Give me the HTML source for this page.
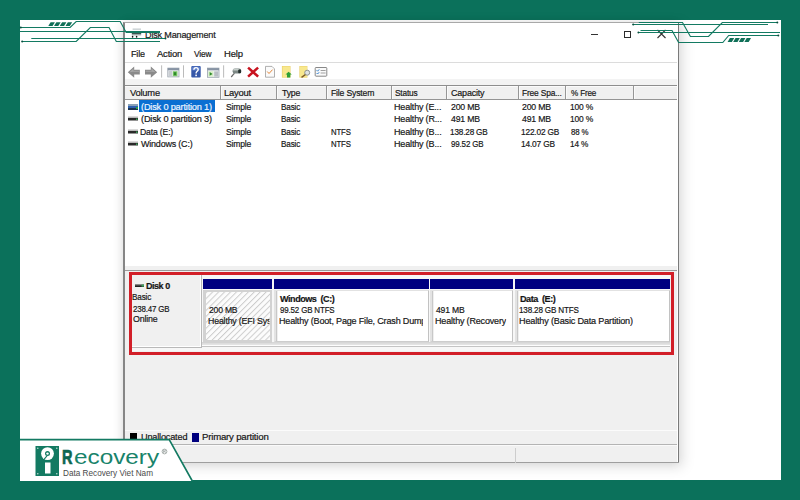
<!DOCTYPE html>
<html><head><meta charset="utf-8">
<style>
*{margin:0;padding:0;box-sizing:border-box}
html,body{width:800px;height:500px;overflow:hidden}
body{background:#0b715b;position:relative;font-family:"Liberation Sans",sans-serif;color:#161616}
.a{position:absolute}
.t{position:absolute;white-space:nowrap;font-size:9.75px;line-height:11px;letter-spacing:-0.2px;color:#161616;-webkit-text-stroke:.2px #161616}
.b{font-weight:bold;color:#141414;letter-spacing:-.5px}
</style></head><body>

<div class="a" style="left:20px;top:20px;width:761px;height:460px;background:#fff"></div>
<div class="a" style="left:123px;top:22px;width:556px;height:441px;background:transparent;box-shadow:3px 3px 12px 1px rgba(0,0,0,.13),-2px 0 9px rgba(0,0,0,.06)"></div>
<div class="a" style="left:123px;top:22px;width:556px;height:441px;background:#fff;border:1px solid #a8a8a8;border-left:2px solid #868686;border-right:1.8px solid #7a7a7a;border-bottom:1px solid #8a8a8a"></div>
<div class="t" style="left:145.07px;top:28.75px;transform:scaleX(0.933);transform-origin:0 0;color:#222">Disk Management</div>
<svg class="a" style="left:127px;top:26px" width="16" height="14" viewBox="127 26 16 14">
  <rect x="132.6" y="28.4" width="8.4" height="1.6" fill="#cfd6d8"/>
  <rect x="131.8" y="31.4" width="9.4" height="2.6" fill="#3d5650"/>
  <rect x="131.8" y="34" width="9.4" height="1.4" fill="#9aa7a8"/>
  <ellipse cx="132.6" cy="36.8" rx="0.8" ry="1" fill="#111"/><ellipse cx="136.6" cy="36.8" rx="0.8" ry="1" fill="#111"/>
</svg>
<div class="a" style="left:591px;top:34px;width:7px;height:1px;background:#333"></div>
<div class="a" style="left:623.5px;top:30.5px;width:7.5px;height:7.5px;border:1.2px solid #2b2b2b"></div>
<svg class="a" style="left:656px;top:29px" width="11" height="10" viewBox="0 0 11 10"><path d="M1.5 1 L9.5 9 M9.5 1 L1.5 9" stroke="#333" stroke-width="1.1"/></svg>
<div class="t" style="left:130.82px;top:47.75px;transform:scaleX(0.929);transform-origin:0 0;">File</div>
<div class="t" style="left:156.80px;top:47.75px;transform:scaleX(0.969);transform-origin:0 0;">Action</div>
<div class="t" style="left:194.30px;top:47.75px;transform:scaleX(0.857);transform-origin:0 0;">View</div>
<div class="t" style="left:223.73px;top:47.75px;transform:scaleX(0.972);transform-origin:0 0;">Help</div>
<div class="a" style="left:125px;top:62px;width:552px;height:1px;background:#dcdcdc"></div>
<svg class="a" style="left:125px;top:63px" width="210" height="17" viewBox="125 63 210 17">
 <!-- back arrow -->
 <path d="M127.8 72.2 L134.2 66.6 V69.8 H139.8 V74.6 H134.2 V77.8 Z" fill="#8a8a8a"/>
 <path d="M129.5 72.2 L133.5 68.6 V70.8 H139 V71.8 H133 Z" fill="#a8a8a8"/>
 <!-- forward arrow -->
 <path d="M157.2 72.2 L150.8 66.6 V69.8 H145 V74.6 H150.8 V77.8 Z" fill="#8a8a8a"/>
 <path d="M155.5 72.2 L151.5 68.6 V70.8 H145.6 V71.8 H152 Z" fill="#a8a8a8"/>
 <!-- separators -->
 <rect x="161.2" y="65.3" width="0.9" height="12.3" fill="#b4b4b4"/>
 <rect x="183" y="65.3" width="0.9" height="12.3" fill="#b4b4b4"/>
 <rect x="223.2" y="65.3" width="0.9" height="12.3" fill="#b4b4b4"/>
 <!-- window icon 1 -->
 <rect x="167.8" y="68.1" width="11.2" height="8.8" fill="#eef1f4" stroke="#9aa3ad" stroke-width="0.8"/>
 <rect x="167.8" y="68.1" width="11.2" height="2.2" fill="#8793a3"/>
 <rect x="168.5" y="71" width="3.5" height="5.5" fill="#c9cdd2"/>
 <rect x="172.8" y="71.2" width="4.6" height="5" fill="#7ec86a"/>
 <rect x="173.8" y="72.2" width="2.4" height="3" fill="#2f8a2a"/>
 <!-- help -->
 <rect x="191.3" y="66" width="9.4" height="11.6" rx="1" fill="#3657a8"/>
 <rect x="192" y="66.6" width="8" height="4" rx="1" fill="#5a7cc8"/>
 <path d="M193.9 69.8 Q193.9 67.6 196 67.6 Q198.2 67.6 198.2 69.6 Q198.2 70.9 196.8 71.6 Q196.1 72 196.1 73.4" fill="none" stroke="#fff" stroke-width="1.4"/>
 <rect x="195.3" y="74.6" width="1.6" height="1.6" fill="#fff"/>
 <!-- window icon 2 -->
 <rect x="207.4" y="68.1" width="11.6" height="9.2" fill="#eceff2" stroke="#9aa3ad" stroke-width="0.8"/>
 <rect x="207.4" y="68.1" width="11.6" height="2.2" fill="#8793a3"/>
 <rect x="208.3" y="71.2" width="5" height="5.5" fill="#d8efc8"/>
 <path d="M209.6 72 L212.6 73.9 L209.6 75.8 Z" fill="#2f8a2a"/>
 <rect x="214.2" y="71.4" width="4" height="5.2" fill="#b9bec4"/>
 <!-- connect -->
 <path d="M231.2 77 L234.5 73.2" stroke="#6b6b6b" stroke-width="1.2"/>
 <rect x="232.6" y="68.6" width="8.6" height="4.8" rx="2.2" fill="#7d8885"/>
 <rect x="233.2" y="69" width="6" height="1.5" fill="#c5cdca"/>
 <rect x="238.2" y="69.4" width="2.9" height="3.8" rx="1" fill="#23302d"/>
 <!-- red x -->
 <path d="M249 68.4 L257.2 75.8 M257.2 68.4 L249 75.8" stroke="#c8131f" stroke-width="2.5" stroke-linecap="square"/>
 <!-- checklist doc -->
 <path d="M265.5 66.4 H272 L274.5 68.9 V77.2 H265.5 Z" fill="#fbfbfb" stroke="#9c9c9c" stroke-width="0.8"/>
 <path d="M267.2 71.5 L269 73.5 L272.6 69.6" fill="none" stroke="#e3873a" stroke-width="1"/>
 <!-- yellow doc green arrow -->
 <rect x="281.9" y="66" width="8.6" height="11.6" fill="#ead06a"/>
 <rect x="282.5" y="66.5" width="7.5" height="10.6" fill="#f8e88e"/>
 <path d="M288.6 71.8 L291.8 74.6 H290.3 V77.6 H287 V74.6 H285.5 Z" fill="#2ea036"/>
 <!-- yellow doc magnifier -->
 <rect x="299.4" y="66" width="8" height="11.6" fill="#ead06a"/>
 <rect x="300" y="66.5" width="7" height="10.6" fill="#f8e88e"/>
 <circle cx="307.2" cy="72.7" r="2.5" fill="#dfe3e3" stroke="#8d9393" stroke-width="1"/>
 <path d="M305.4 74.6 L301.5 77.4" stroke="#7a5a2a" stroke-width="1.3"/>
 <!-- properties -->
 <rect x="315.2" y="67.5" width="11.6" height="8.7" rx="0.8" fill="#fafafa" stroke="#7b7b7b" stroke-width="0.9"/>
 <path d="M316.6 70.2 L317.6 71.2 L319.2 69.4 M316.6 73 L317.6 74 L319.2 72.2" fill="none" stroke="#3a86d0" stroke-width="1"/>
 <rect x="320.6" y="70" width="5" height="0.8" fill="#8a8a8a"/>
 <rect x="320.6" y="72.6" width="5" height="0.8" fill="#8a8a8a"/>
</svg>
<div class="a" style="left:125px;top:79px;width:552px;height:6px;background:#f3f3f3"></div>
<div class="a" style="left:125px;top:85px;width:552px;height:1px;background:#8e8e8e"></div>
<div class="a" style="left:125px;top:86px;width:552px;height:13px;background:#f0f0f0;border-top:1px solid #fbfbfb"></div>
<div class="a" style="left:125px;top:98.5px;width:552px;height:1.2px;background:#949494"></div>
<div class="a" style="left:220px;top:86px;width:1.1px;height:12.5px;background:#969696;box-shadow:1px 0 0 #fafafa"></div>
<div class="a" style="left:276.2px;top:86px;width:1.1px;height:12.5px;background:#969696;box-shadow:1px 0 0 #fafafa"></div>
<div class="a" style="left:326.2px;top:86px;width:1.1px;height:12.5px;background:#969696;box-shadow:1px 0 0 #fafafa"></div>
<div class="a" style="left:390.5px;top:86px;width:1.1px;height:12.5px;background:#969696;box-shadow:1px 0 0 #fafafa"></div>
<div class="a" style="left:446.2px;top:86px;width:1.1px;height:12.5px;background:#969696;box-shadow:1px 0 0 #fafafa"></div>
<div class="a" style="left:517.6px;top:86px;width:1.1px;height:12.5px;background:#969696;box-shadow:1px 0 0 #fafafa"></div>
<div class="a" style="left:565.3px;top:86px;width:1.1px;height:12.5px;background:#969696;box-shadow:1px 0 0 #fafafa"></div>
<div class="a" style="left:632.9px;top:86px;width:1.1px;height:12.5px;background:#969696;box-shadow:1px 0 0 #fafafa"></div>
<div class="t" style="left:130.40px;top:86.75px;transform:scaleX(0.955);transform-origin:0 0;">Volume</div>
<div class="t" style="left:224.24px;top:86.75px;transform:scaleX(0.963);transform-origin:0 0;">Layout</div>
<div class="t" style="left:281.80px;top:86.75px;transform:scaleX(0.895);transform-origin:0 0;">Type</div>
<div class="t" style="left:330.81px;top:86.75px;transform:scaleX(0.888);transform-origin:0 0;">File System</div>
<div class="t" style="left:395.00px;top:86.75px;transform:scaleX(0.852);transform-origin:0 0;">Status</div>
<div class="t" style="left:451.00px;top:86.75px;transform:scaleX(0.919);transform-origin:0 0;">Capacity</div>
<div class="t" style="left:521.64px;top:86.75px;transform:scaleX(0.861);transform-origin:0 0;">Free Spa...</div>
<div class="t" style="left:571.25px;top:86.75px;transform:scaleX(0.833);transform-origin:0 0;">% Free</div>
<div class="a" style="left:139px;top:100px;width:76px;height:12px;background:#0a6fd2"></div>
<svg class="a" style="left:128px;top:103.90px" width="10" height="6" viewBox="0 0 10 6"><rect x="0" y="0" width="10" height="2" fill="#8aa2b8"/><rect x="0" y="2" width="10" height="2" fill="#2d5fb0"/><rect x="0" y="4" width="10" height="2" fill="#1b3350"/><rect x="8" y="3" width="2" height="2" fill="#2aa050"/></svg>
<div class="t" style="left:140.60px;top:100.85px;transform:scaleX(0.944);transform-origin:0 0;color:#eef5ff;-webkit-text-stroke-color:#eef5ff">(Disk 0 partition 1)</div>
<div class="t" style="left:225.80px;top:100.85px;transform:scaleX(0.876);transform-origin:0 0;">Simple</div>
<div class="t" style="left:280.96px;top:100.85px;transform:scaleX(0.841);transform-origin:0 0;">Basic</div>
<div class="t" style="left:394.07px;top:100.85px;transform:scaleX(0.925);transform-origin:0 0;">Healthy (E...</div>
<div class="t" style="left:451.25px;top:100.85px;transform:scaleX(0.894);transform-origin:0 0;">200 MB</div>
<div class="t" style="left:521.90px;top:100.85px;transform:scaleX(0.894);transform-origin:0 0;">200 MB</div>
<div class="t" style="left:570.38px;top:100.85px;transform:scaleX(0.865);transform-origin:0 0;">100 %</div>
<svg class="a" style="left:128px;top:116.35px" width="10" height="6" viewBox="0 0 10 6"><rect x="0" y="0.5" width="10" height="1.5" fill="#b8b8b8"/><rect x="0" y="2" width="10" height="2.5" fill="#2a2a2a"/><rect x="8" y="2.5" width="1.5" height="1.5" fill="#3aa35a"/></svg>
<div class="t" style="left:140.60px;top:113.30px;transform:scaleX(0.944);transform-origin:0 0;">(Disk 0 partition 3)</div>
<div class="t" style="left:225.80px;top:113.30px;transform:scaleX(0.876);transform-origin:0 0;">Simple</div>
<div class="t" style="left:280.96px;top:113.30px;transform:scaleX(0.841);transform-origin:0 0;">Basic</div>
<div class="t" style="left:394.07px;top:113.30px;transform:scaleX(0.925);transform-origin:0 0;">Healthy (R...</div>
<div class="t" style="left:451.25px;top:113.30px;transform:scaleX(0.894);transform-origin:0 0;">491 MB</div>
<div class="t" style="left:521.90px;top:113.30px;transform:scaleX(0.894);transform-origin:0 0;">491 MB</div>
<div class="t" style="left:570.38px;top:113.30px;transform:scaleX(0.865);transform-origin:0 0;">100 %</div>
<svg class="a" style="left:128px;top:128.80px" width="10" height="6" viewBox="0 0 10 6"><rect x="0" y="0.5" width="10" height="1.5" fill="#b8b8b8"/><rect x="0" y="2" width="10" height="2.5" fill="#2a2a2a"/><rect x="8" y="2.5" width="1.5" height="1.5" fill="#3aa35a"/></svg>
<div class="t" style="left:139.71px;top:125.75px;transform:scaleX(0.889);transform-origin:0 0;">Data (E:)</div>
<div class="t" style="left:225.80px;top:125.75px;transform:scaleX(0.876);transform-origin:0 0;">Simple</div>
<div class="t" style="left:280.96px;top:125.75px;transform:scaleX(0.841);transform-origin:0 0;">Basic</div>
<div class="t" style="left:330.90px;top:125.75px;transform:scaleX(0.800);transform-origin:0 0;">NTFS</div>
<div class="t" style="left:394.07px;top:125.75px;transform:scaleX(0.930);transform-origin:0 0;">Healthy (B...</div>
<div class="t" style="left:450.41px;top:125.75px;transform:scaleX(0.839);transform-origin:0 0;">138.28 GB</div>
<div class="t" style="left:521.05px;top:125.75px;transform:scaleX(0.852);transform-origin:0 0;">122.02 GB</div>
<div class="t" style="left:571.25px;top:125.75px;transform:scaleX(0.807);transform-origin:0 0;">88 %</div>
<svg class="a" style="left:128px;top:141.25px" width="10" height="6" viewBox="0 0 10 6"><rect x="0" y="0.5" width="10" height="1.5" fill="#b8b8b8"/><rect x="0" y="2" width="10" height="2.5" fill="#2a2a2a"/><rect x="8" y="2.5" width="1.5" height="1.5" fill="#3aa35a"/></svg>
<div class="t" style="left:140.60px;top:138.20px;transform:scaleX(0.918);transform-origin:0 0;">Windows (C:)</div>
<div class="t" style="left:225.80px;top:138.20px;transform:scaleX(0.876);transform-origin:0 0;">Simple</div>
<div class="t" style="left:280.96px;top:138.20px;transform:scaleX(0.841);transform-origin:0 0;">Basic</div>
<div class="t" style="left:330.90px;top:138.20px;transform:scaleX(0.800);transform-origin:0 0;">NTFS</div>
<div class="t" style="left:394.07px;top:138.20px;transform:scaleX(0.930);transform-origin:0 0;">Healthy (B...</div>
<div class="t" style="left:451.25px;top:138.20px;transform:scaleX(0.819);transform-origin:0 0;">99.52 GB</div>
<div class="t" style="left:521.04px;top:138.20px;transform:scaleX(0.856);transform-origin:0 0;">14.07 GB</div>
<div class="t" style="left:570.40px;top:138.20px;transform:scaleX(0.845);transform-origin:0 0;">14 %</div>
<div class="a" style="left:125px;top:265.5px;width:552px;height:4.5px;background:#f0f0f0"></div>
<div class="a" style="left:125px;top:270px;width:552px;height:1px;background:#9a9a9a"></div>
<div class="a" style="left:125px;top:271px;width:552px;height:159px;background:#f0f0f0"></div>
<div class="a" style="left:132px;top:275px;width:538px;height:76px;background:#f7f7f7"></div>
<div class="a" style="left:132px;top:275px;width:70px;height:73px;background:#f0f0f0;border-right:1px solid #b9b9b9;border-bottom:1px solid #b9b9b9;box-shadow:inset -1px -1px 0 #fff"></div>
<div class="a" style="left:202px;top:342px;width:468px;height:3px;background:linear-gradient(#d4d4d4,#e6e6e6)"></div>
<div class="a" style="left:202px;top:345px;width:468px;height:1px;background:#fdfdfd"></div>
<div class="a" style="left:202px;top:346.3px;width:468px;height:1.2px;background:#c4c4c4"></div>
<div class="a" style="left:203px;top:279.2px;width:69px;height:9.6px;background:#000080"></div>
<div class="a" style="left:203px;top:289.5px;width:69px;height:53px;background:#d2d2d2"></div>
<svg class="a" style="left:205.6px;top:291.5px" width="64.4" height="48.5"><defs><pattern id="h" width="4.2" height="4.2" patternUnits="userSpaceOnUse" patternTransform="rotate(45)"><rect width="4.2" height="4.2" fill="#fcfcfc"/><rect width="1" height="4.2" fill="#cdcdcd"/></pattern></defs><rect width="100%" height="100%" fill="url(#h)"/></svg>
<div class="a" style="left:274.2px;top:279.2px;width:154.8px;height:9.6px;background:#000080"></div>
<div class="a" style="left:274.2px;top:289.5px;width:154.8px;height:52.7px;background:#fff;border-left:2.4px solid #e3e3e3;border-right:1px solid #c2c2c2;border-bottom:1px solid #cdcdcd;border-top:1px solid #e2e2e2;box-shadow:inset 1.3px 0 0 #c8c8c8"></div>
<div class="a" style="left:430.4px;top:279.2px;width:82.4px;height:9.6px;background:#000080"></div>
<div class="a" style="left:430.4px;top:289.5px;width:82.4px;height:52.7px;background:#fff;border-left:2.4px solid #e3e3e3;border-right:1px solid #c2c2c2;border-bottom:1px solid #cdcdcd;border-top:1px solid #e2e2e2;box-shadow:inset 1.3px 0 0 #c8c8c8"></div>
<div class="a" style="left:514.9px;top:279.2px;width:155.1px;height:9.6px;background:#000080"></div>
<div class="a" style="left:514.9px;top:289.5px;width:155.1px;height:52.7px;background:#fff;border-left:2.4px solid #e3e3e3;border-right:1px solid #c2c2c2;border-bottom:1px solid #cdcdcd;border-top:1px solid #e2e2e2;box-shadow:inset 1.3px 0 0 #c8c8c8"></div>
<svg class="a" style="left:134.5px;top:284px" width="9" height="3" viewBox="0 0 9 3"><rect width="9" height="1.2" fill="#8a8a8a"/><rect y="1.2" width="9" height="1.8" fill="#222"/><rect x="6.5" y="0.6" width="2.5" height="2" fill="#3aa35a"/></svg>
<div class="t b" style="left:146.00px;top:280.25px;transform:scaleX(0.923);transform-origin:0 0;">Disk 0</div>
<div class="t" style="left:132.16px;top:291.25px;transform:scaleX(0.841);transform-origin:0 0;">Basic</div>
<div class="t" style="left:132.70px;top:302.55px;transform:scaleX(0.811);transform-origin:0 0;">238.47 GB</div>
<div class="t" style="left:133.00px;top:313.25px;transform:scaleX(0.907);transform-origin:0 0;">Online</div>
<div class="t" style="left:208.50px;top:304.05px;transform:scaleX(0.875);transform-origin:0 0;">200 MB</div>
<div class="t" style="left:207.80px;top:315.05px;transform:scaleX(0.903);transform-origin:0 0;width:68.1px;overflow:hidden;">Healthy (EFI System Partition)</div>
<div class="t b" style="left:280.20px;top:292.75px;transform:scaleX(0.929);transform-origin:0 0;">Windows&nbsp; (C:)</div>
<div class="t" style="left:280.20px;top:304.05px;transform:scaleX(0.816);transform-origin:0 0;">99.52 GB NTFS</div>
<div class="t" style="left:279.27px;top:315.05px;transform:scaleX(0.928);transform-origin:0 0;width:155.4px;overflow:hidden;">Healthy (Boot, Page File, Crash Dump, Basic Data Partition)</div>
<div class="t" style="left:436.00px;top:304.05px;transform:scaleX(0.881);transform-origin:0 0;">491 MB</div>
<div class="t" style="left:435.07px;top:315.05px;transform:scaleX(0.925);transform-origin:0 0;width:77.3px;overflow:hidden;">Healthy (Recovery Partition)</div>
<div class="t b" style="left:520.20px;top:292.75px;transform:scaleX(0.934);transform-origin:0 0;">Data&nbsp; (E:)</div>
<div class="t" style="left:519.37px;top:304.05px;transform:scaleX(0.831);transform-origin:0 0;">138.28 GB NTFS</div>
<div class="t" style="left:519.27px;top:315.05px;transform:scaleX(0.934);transform-origin:0 0;">Healthy (Basic Data Partition)</div>
<div class="a" style="left:129px;top:272px;width:544.5px;height:82.7px;border:3.3px solid #d21f28"></div>
<div class="a" style="left:125px;top:429.5px;width:552px;height:1px;background:#fbfbfb"></div>
<div class="a" style="left:125px;top:430.5px;width:552px;height:13.5px;background:#f0f0f0"></div>
<div class="a" style="left:125px;top:444px;width:552px;height:1px;background:#b4b4b4"></div>
<div class="a" style="left:125px;top:445px;width:552px;height:17.5px;background:#f0f0f0;border-top:1px solid #fafafa"></div>
<div class="a" style="left:123px;top:462.2px;width:556px;height:1.2px;background:#9e9e9e"></div>
<div class="a" style="left:514.8px;top:448px;width:1px;height:14.5px;background:#cdcdcd"></div>
<div class="a" style="left:130px;top:432.5px;width:7px;height:7.5px;background:#000"></div>
<div class="t" style="left:141.00px;top:431.05px;transform:scaleX(0.939);transform-origin:0 0;">Unallocated</div>
<div class="a" style="left:191.8px;top:432.5px;width:7.5px;height:9px;background:#00007f"></div>
<div class="t" style="left:202.32px;top:431.05px;transform:scaleX(0.985);transform-origin:0 0;">Primary partition</div>
<svg class="a" style="left:0;top:0" width="800" height="64" viewBox="0 0 800 64"><g fill="none" stroke="#137a62" stroke-width="1.15">
 <path d="M20.1 27.5 H70.1 L76.2 21.5 H120.2 L126.2 32.5 H160"/>
 <path d="M20 31.5 H160"/>
 <path d="M31.3 38.5 H166"/>
 <path d="M21.7 41.5 H76.2 L90.3 27.5 H109 L116.3 41.5 H160"/>
 <path d="M638.75 22.5 H682.5 L690.4 36.5 H708.5 L722.3 22.5 H777.6"/>
 <path d="M632.6 24.5 H768"/>
 <path d="M640.5 30.5 H672 L678.6 42.5 H722.8 L728.7 35.5 H778.6"/>
 <path d="M637.9 32.5 H780"/>
</g>
<g fill="#0f6f57"><path d="M48.30 26.0 H52.60 L54.90 22.25 H50.60 Z"/><path d="M54.05 26.0 H58.35 L60.65 22.25 H56.35 Z"/><path d="M59.80 26.0 H64.10 L66.40 22.25 H62.10 Z"/><path d="M65.55 26.0 H69.85 L72.15 22.25 H67.85 Z"/><path d="M727.60 41.9 H731.90 L734.20 38.0 H729.90 Z"/><path d="M733.20 41.9 H737.50 L739.80 38.0 H735.50 Z"/><path d="M738.80 41.9 H743.10 L745.40 38.0 H741.10 Z"/><path d="M744.40 41.9 H748.70 L751.00 38.0 H746.70 Z"/></g>
<g fill="#0a4f3f">
<circle cx="20.8" cy="27.5" r="1"/><circle cx="22.2" cy="41.5" r="1"/><circle cx="165.5" cy="38.5" r="0.9"/>
<circle cx="777.3" cy="22.5" r="1"/><circle cx="633.2" cy="24.5" r="1"/><circle cx="778.3" cy="35.5" r="1"/><circle cx="638.4" cy="32.5" r="0.9"/>
</g></svg>
<svg class="a" style="left:0;top:430px" width="200" height="70" viewBox="0 430 200 70">
 <path d="M20 439.6 H169.2 L192.3 481 H20 Z" fill="#fff"/>
 <path d="M20 439.6 H169.2 L192.3 481" fill="none" stroke="#137a62" stroke-width="1.6"/>
 <rect x="35.5" y="446" width="23.5" height="30" fill="#137a62"/>
 <circle cx="47.5" cy="453.6" r="6.4" fill="#fff"/>
 <circle cx="47.5" cy="453.6" r="2.5" fill="#137a62"/>
 <circle cx="47.5" cy="453.6" r="1.2" fill="#fff"/>
 <path d="M43.6 459.8 L47 455.8" stroke="#137a62" stroke-width="1.1"/>
 <rect x="45" y="462.5" width="5.5" height="11" fill="#fff"/>
 <circle cx="37.8" cy="448.2" r="0.7" fill="#cfe9e0"/><circle cx="56.8" cy="448.2" r="0.7" fill="#cfe9e0"/>
 <circle cx="37.8" cy="473.8" r="0.7" fill="#cfe9e0"/><circle cx="56.8" cy="473.8" r="0.7" fill="#cfe9e0"/>
</svg>
<div class="a" style="left:62.4px;top:446px;font-size:19.6px;line-height:22px;font-weight:bold;color:#0d6650;white-space:nowrap;transform:scaleX(.74);transform-origin:0 0;-webkit-text-stroke:.7px #0d6650">R</div>
<div class="a" style="left:73.6px;top:446px;font-size:19.6px;line-height:22px;color:#18836a;white-space:nowrap;transform:scaleX(1.24);transform-origin:0 0;letter-spacing:0px">ecovery</div>
<svg class="a" style="left:160.7px;top:448.2px" width="7" height="7" viewBox="0 0 7 7"><circle cx="3.5" cy="3.5" r="2.4" fill="none" stroke="#8c9592" stroke-width=".75"/><path d="M2.6 5 V2.1 H3.8 Q4.6 2.1 4.6 2.8 Q4.6 3.5 3.8 3.5 H2.6 M3.6 3.5 L4.6 5" fill="none" stroke="#8c9592" stroke-width=".6"/></svg>
<div class="a" style="left:62.9px;top:468px;font-size:9px;line-height:10px;color:#4a4a4a;white-space:nowrap;transform:scaleX(.91);transform-origin:0 0">Data Recovery Viet Nam</div>

</body></html>
